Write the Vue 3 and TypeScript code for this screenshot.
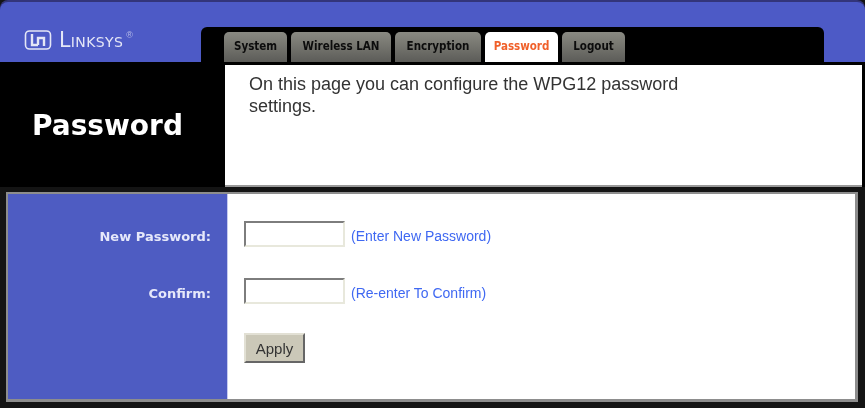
<script setup lang="ts">
const tabs = [
  { label: 'System', width: 63, active: false },
  { label: 'Wireless LAN', width: 100, active: false },
  { label: 'Encryption', width: 86, active: false },
  { label: 'Password', width: 73, active: true },
  { label: 'Logout', width: 63, active: false },
]
</script>

<template>
  <div class="page">
    <header class="top">
      <div class="brand">
        <svg class="logo" width="28" height="22" viewBox="0 0 28 22" fill="none" stroke="#e4e6f6">
          <rect x="1.5" y="2" width="25" height="18" rx="4" stroke-width="1.6" />
          <path d="M8 5v11h6M14 16V9h6v8" stroke-width="2.4" />
        </svg>
        <span class="wordmark">Linksys</span><span class="reg">®</span>
      </div>
      <nav class="tabbar">
        <a
          v-for="t in tabs"
          :key="t.label"
          class="tab"
          :class="{ active: t.active }"
          :style="{ width: t.width + 'px' }"
        >{{ t.label }}</a>
      </nav>
      <div class="top-right"></div>
    </header>
    <section class="intro">
      <div class="title-cell"><h1>Password</h1></div>
      <div class="desc">
        <p>On this page you can configure the WPG12 password settings.</p>
      </div>
    </section>
    <section class="panel">
      <div class="labels">
        <label>New Password:</label>
        <label>Confirm:</label>
      </div>
      <div class="fields">
        <div class="row">
          <input class="input" type="password" />
          <span class="hint">(Enter New Password)</span>
        </div>
        <div class="row">
          <input class="input" type="password" />
          <span class="hint">(Re-enter To Confirm)</span>
        </div>
        <button class="apply" type="button">Apply</button>
      </div>
    </section>
  </div>
</template>

<style>
html, body { margin: 0; background: #111; }
</style>

<style scoped>
.page {
  width: 865px;
  height: 408px;
  box-sizing: border-box;
  overflow: hidden;
  background: #141414;
  display: flex;
  flex-direction: column;
  font-family: "Liberation Sans", Arial, sans-serif;
  filter: blur(0.55px);
}
.top {
  margin-top: 2px;
  height: 60px;
  flex: none;
  display: flex;
  background: #4d5ac6;
  border-radius: 8px 8px 0 0;
  box-shadow: 0 -2px 0 #33357a;
}
.brand {
  width: 201px;
  flex: none;
  box-sizing: border-box;
  padding: 26px 0 0 24px;
  display: flex;
  align-items: flex-start;
  color: #e4e6f6;
}
.logo { margin-top: 1px; }
.wordmark {
  margin-left: 7px;
  font-family: "DejaVu Sans", sans-serif;
  font-variant: small-caps;
  font-size: 20.5px;
  line-height: 24px;
  letter-spacing: 0.4px;
  transform-origin: left;
}
.reg { font-size: 9px; margin: 2px 0 0 3px; color: #b8bde8; }
.tabbar {
  flex: none;
  width: 623px;
  margin-top: 25px;
  box-sizing: border-box;
  padding: 5px 0 0 23px;
  display: flex;
  gap: 4px;
  background: #000;
  border-radius: 6px 6px 0 0;
}
.tab {
  box-sizing: border-box;
  height: 30px;
  border-radius: 5px 5px 0 0;
  background: linear-gradient(#8a8a82, #5c5c58);
  color: #0c0c0c;
  font-family: "DejaVu Sans Condensed", "DejaVu Sans", sans-serif;
  font-weight: 700;
  font-size: 11.5px;
  line-height: 29px;
  text-align: center;
  white-space: nowrap;
}
.tab.active {
  height: 33px;
  background: #fff;
  color: #f0602a;
}
.top-right { flex: 1; }
.intro {
  height: 125px;
  flex: none;
  display: flex;
  background: #000;
}
.title-cell {
  width: 225px;
  flex: none;
  box-sizing: border-box;
  padding: 46px 0 0 32px;
}
h1 {
  margin: 0;
  color: #fff;
  font-family: "DejaVu Sans", sans-serif;
  font-weight: 700;
  font-size: 28px;
  line-height: 36px;
}
.desc {
  width: 637px;
  flex: none;
  box-sizing: border-box;
  margin-top: 3px;
  padding: 8px 150px 0 24px;
  background: #fff;
  border-bottom: 2px solid #999;
}
.desc p {
  margin: 0;
  color: #333;
  font-size: 18px;
  line-height: 22px;
}
.panel {
  margin: 0 7px 0 6px;
  flex: 1;
  margin-top: 5px;
  margin-bottom: 6px;
  display: flex;
  border: 2px solid #8d8d8d;
  border-right-width: 3px;
  border-bottom-width: 3px;
}
.labels {
  width: 220px;
  flex: none;
  box-sizing: border-box;
  background: #4e5cc2;
  padding: 33px 16px 0 0;
  display: flex;
  flex-direction: column;
  align-items: flex-end;
  gap: 38px;
  border-right: 1px solid #c6cbf0;
}
.labels label {
  color: #e6e8fa;
  font-family: "DejaVu Sans", sans-serif;
  font-weight: 700;
  font-size: 13px;
  line-height: 19px;
}
.fields {
  flex: 1;
  background: #fff;
  box-sizing: border-box;
  padding: 27px 0 0 16px;
  display: flex;
  flex-direction: column;
  align-items: flex-start;
}
.row {
  display: flex;
  align-items: center;
  gap: 6px;
  height: 26px;
  margin-bottom: 31px;
}
.input {
  width: 101px;
  height: 26px;
  box-sizing: border-box;
  padding: 0;
  background: #fff;
  border: 2px solid;
  border-color: #7d7d7d #e8e8dc #e8e8dc #7d7d7d;
  outline: none;
}
.hint {
  color: #3f68f2;
  font-size: 14px;
  line-height: 18px;
  margin-top: 3px;
}
.apply {
  width: 61px;
  height: 30px;
  padding: 0;
  margin-top: -2px;
  background: #cbc8b8;
  border: 2px solid;
  border-color: #e2e0d4 #666 #666 #e2e0d4;
  color: #333;
  font-family: "Liberation Sans", Arial, sans-serif;
  font-size: 15px;
}
</style>
